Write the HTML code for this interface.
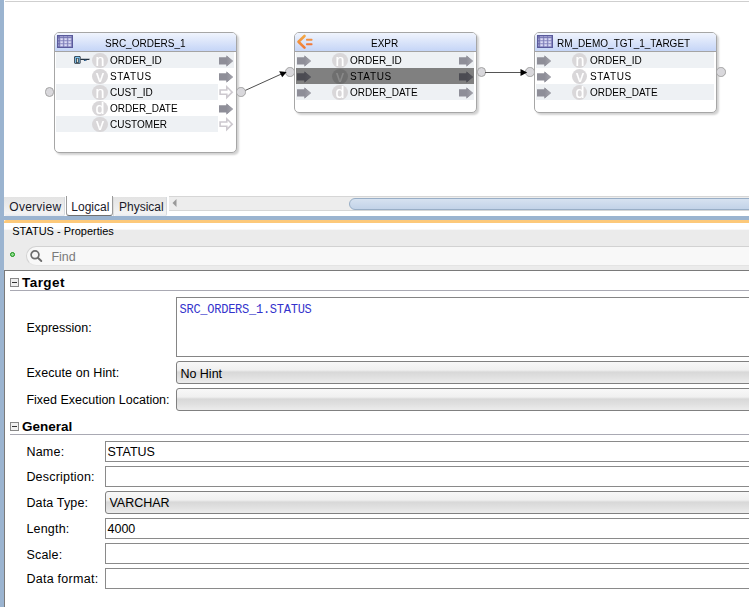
<!DOCTYPE html>
<html><head><meta charset="utf-8"><style>
html,body{margin:0;padding:0;}
body{width:749px;height:607px;overflow:hidden;position:relative;background:#fff;font-family:'Liberation Sans', sans-serif;}
.a{position:absolute;}
.t{position:absolute;white-space:pre;}
.box{box-sizing:border-box;border:1px solid #a6a6a6;border-radius:5px;background:#fff;box-shadow:2px 2px 2px rgba(0,0,0,0.18);}
</style></head><body>
<svg width="0" height="0" style="position:absolute"><defs><linearGradient id="agl" x1="0" y1="0" x2="1" y2="0"><stop offset="0" stop-color="#8e8e98"/><stop offset="1" stop-color="#a4a4ac"/></linearGradient><linearGradient id="agd" x1="0" y1="0" x2="1" y2="0"><stop offset="0" stop-color="#4b4b52"/><stop offset="1" stop-color="#55555c"/></linearGradient></defs></svg>
<div class="a" style="left:0px;top:0px;width:4px;height:607px;background:#9bb4d0"></div>
<div class="a" style="left:5px;top:1px;width:744px;height:1px;background:#cfcfcf"></div>
<div class="a box" style="left:54px;top:32px;width:183px;height:121px;"></div>
<div class="a" style="left:55px;top:33px;width:181px;height:18px;background:linear-gradient(#f0f4fd,#c5d5f7);border-radius:4px 4px 0 0"></div>
<div class="a" style="left:55px;top:51px;width:181px;height:1px;background:#a4a4a4"></div>
<svg class="a" style="left:57px;top:35px" width="16" height="13" viewBox="0 0 16 13"><rect x="0.5" y="0.5" width="15" height="12" fill="#7272ae" stroke="#5a5a9c"/><g fill="#b4b4de"><rect x="3" y="3" width="3.4" height="2.6"/><rect x="7" y="3" width="3.4" height="2.6"/><rect x="11" y="3" width="3.4" height="2.6"/><rect x="3" y="6" width="3.4" height="2.6"/><rect x="7" y="6" width="3.4" height="2.6"/><rect x="11" y="6" width="3.4" height="2.6"/><rect x="3" y="9" width="3.4" height="2.6"/><rect x="7" y="9" width="3.4" height="2.6"/><rect x="11" y="9" width="3.4" height="2.6"/></g><g fill="#e2e2f6"><rect x="3.8" y="3.6" width="1.8" height="1.3"/><rect x="7.8" y="3.6" width="1.8" height="1.3"/><rect x="11.8" y="3.6" width="1.8" height="1.3"/><rect x="3.8" y="6.6" width="1.8" height="1.3"/><rect x="7.8" y="6.6" width="1.8" height="1.3"/><rect x="11.8" y="6.6" width="1.8" height="1.3"/><rect x="3.8" y="9.6" width="1.8" height="1.3"/><rect x="7.8" y="9.6" width="1.8" height="1.3"/><rect x="11.8" y="9.6" width="1.8" height="1.3"/></g><g fill="#a8a8d8"><rect x="3" y="1.2" width="3.4" height="1"/><rect x="7" y="1.2" width="3.4" height="1"/><rect x="11" y="1.2" width="3.4" height="1"/><rect x="1.3" y="3.5" width="1" height="1.6"/><rect x="1.3" y="6.5" width="1" height="1.6"/><rect x="1.3" y="9.5" width="1" height="1.6"/></g></svg>
<div class="t" style="left:104.5px;top:38.64px;font-size:10px;line-height:10px;color:#000;font-weight:400;font-family:'Liberation Sans', sans-serif;will-change:transform">SRC_ORDERS_1</div>
<div class="a" style="left:56px;top:52px;width:178px;height:16px;background:#eef1f4"></div>
<div class="a" style="left:92.25px;top:52.55px;width:15.5px;height:15.5px;border-radius:50%;background:#d9d7d9;"></div><div class="t" style="left:92px;top:52.699999999999996px;width:16px;color:#fff;font-family:'Liberation Sans', sans-serif;font-size:16px;line-height:15px;text-align:center;-webkit-text-stroke:0.15px #fff;will-change:transform">n</div>
<div class="t" style="left:109.5px;top:56.03px;font-size:10px;line-height:10px;color:#000;font-weight:400;font-family:'Liberation Sans', sans-serif;will-change:transform">ORDER_ID</div>
<svg class="a" style="left:219px;top:54.5px" width="15" height="12" viewBox="0 0 15 12"><path d="M0 2.3 H7.5 V0.4 L14 5.9 L7.5 11.4 V9.6 H0 Z" fill="#8e8e98"/><path d="M7.5 0.4 L14 5.9 L7.5 11.4 Z" fill="url(#agl)"/></svg>
<div class="a" style="left:92.25px;top:68.55px;width:15.5px;height:15.5px;border-radius:50%;background:#d9d7d9;"></div><div class="t" style="left:92px;top:68.7px;width:16px;color:#fff;font-family:'Liberation Sans', sans-serif;font-size:16px;line-height:15px;text-align:center;-webkit-text-stroke:0.15px #fff;will-change:transform">v</div>
<div class="t" style="left:109.5px;top:72.03px;font-size:10px;line-height:10px;color:#000;font-weight:400;font-family:'Liberation Sans', sans-serif;will-change:transform;letter-spacing:0.65px">STATUS</div>
<svg class="a" style="left:219px;top:70.5px" width="15" height="12" viewBox="0 0 15 12"><path d="M0 2.3 H7.5 V0.4 L14 5.9 L7.5 11.4 V9.6 H0 Z" fill="#8e8e98"/><path d="M7.5 0.4 L14 5.9 L7.5 11.4 Z" fill="url(#agl)"/></svg>
<div class="a" style="left:56px;top:84px;width:178px;height:16px;background:#eef1f4"></div>
<div class="a" style="left:92.25px;top:84.55px;width:15.5px;height:15.5px;border-radius:50%;background:#d9d7d9;"></div><div class="t" style="left:92px;top:84.7px;width:16px;color:#fff;font-family:'Liberation Sans', sans-serif;font-size:16px;line-height:15px;text-align:center;-webkit-text-stroke:0.15px #fff;will-change:transform">n</div>
<div class="t" style="left:109.5px;top:88.03px;font-size:10px;line-height:10px;color:#000;font-weight:400;font-family:'Liberation Sans', sans-serif;will-change:transform">CUST_ID</div>
<div class="a" style="left:218px;top:84px;width:16px;height:16px;background:#fff"></div>
<svg class="a" style="left:218px;top:84.0px" width="16" height="16" viewBox="0 0 16 16"><path d="M2.1 6 H8.8 V2.8 L14.2 8.15 L8.8 13.5 V10.3 H2.1 Z" fill="#fff" stroke="#cdc9cf" stroke-width="1.6" stroke-linejoin="miter"/></svg>
<div class="a" style="left:92.25px;top:100.55px;width:15.5px;height:15.5px;border-radius:50%;background:#d9d7d9;"></div><div class="t" style="left:92px;top:100.7px;width:16px;color:#fff;font-family:'Liberation Sans', sans-serif;font-size:16px;line-height:15px;text-align:center;-webkit-text-stroke:0.15px #fff;will-change:transform">d</div>
<div class="t" style="left:109.5px;top:104.03px;font-size:10px;line-height:10px;color:#000;font-weight:400;font-family:'Liberation Sans', sans-serif;will-change:transform">ORDER_DATE</div>
<svg class="a" style="left:219px;top:102.5px" width="15" height="12" viewBox="0 0 15 12"><path d="M0 2.3 H7.5 V0.4 L14 5.9 L7.5 11.4 V9.6 H0 Z" fill="#8e8e98"/><path d="M7.5 0.4 L14 5.9 L7.5 11.4 Z" fill="url(#agl)"/></svg>
<div class="a" style="left:56px;top:116px;width:178px;height:16px;background:#eef1f4"></div>
<div class="a" style="left:92.25px;top:116.55px;width:15.5px;height:15.5px;border-radius:50%;background:#d9d7d9;"></div><div class="t" style="left:92px;top:116.7px;width:16px;color:#fff;font-family:'Liberation Sans', sans-serif;font-size:16px;line-height:15px;text-align:center;-webkit-text-stroke:0.15px #fff;will-change:transform">v</div>
<div class="t" style="left:109.5px;top:120.03px;font-size:10px;line-height:10px;color:#000;font-weight:400;font-family:'Liberation Sans', sans-serif;will-change:transform">CUSTOMER</div>
<div class="a" style="left:218px;top:116px;width:16px;height:16px;background:#fff"></div>
<svg class="a" style="left:218px;top:116.0px" width="16" height="16" viewBox="0 0 16 16"><path d="M2.1 6 H8.8 V2.8 L14.2 8.15 L8.8 13.5 V10.3 H2.1 Z" fill="#fff" stroke="#cdc9cf" stroke-width="1.6" stroke-linejoin="miter"/></svg>
<svg class="a" style="left:74px;top:55px" width="17" height="10" viewBox="0 0 17 10"><rect x="0.2" y="1" width="6.4" height="7.8" rx="1.2" fill="#22303e"/><rect x="1.1" y="1.8" width="4.6" height="6.2" rx="0.5" fill="#82c8f2"/><rect x="2.1" y="3" width="2.6" height="5" fill="#2a3848"/><rect x="2.9" y="3.6" width="1" height="3.6" fill="#f2f0d6"/><path d="M6.4 3.8 H15.8 L15.2 5.1 H13 L12.6 5.6 H11.8 L11.2 6.1 H10.3 L9.7 5.1 H6.4 Z" fill="#22303e"/><rect x="10.6" y="4.8" width="1.2" height="1" fill="#3a8ad8"/></svg>
<div class="a box" style="left:294px;top:32px;width:183px;height:81px;"></div>
<div class="a" style="left:295px;top:33px;width:181px;height:18px;background:linear-gradient(#f0f4fd,#c5d5f7);border-radius:4px 4px 0 0"></div>
<div class="a" style="left:295px;top:51px;width:181px;height:1px;background:#a4a4a4"></div>
<svg class="a" style="left:296px;top:34px" width="18" height="16" viewBox="0 0 18 16"><defs><linearGradient id="eg" x1="0" y1="0" x2="0" y2="1"><stop offset="0" stop-color="#f2a845"/><stop offset="1" stop-color="#f27a35"/></linearGradient></defs><path d="M8.5 2 L2.5 7.8 L8.5 13.6" fill="none" stroke="url(#eg)" stroke-width="2.6" stroke-linecap="round" stroke-linejoin="round"/><rect x="10" y="4.8" width="6.5" height="2" rx="0.8" fill="#f29040"/><rect x="10" y="9.2" width="6.5" height="2" rx="0.8" fill="#f27a3a"/></svg>
<div class="t" style="left:370.5px;top:38.64px;font-size:10px;line-height:10px;color:#000;font-weight:400;font-family:'Liberation Sans', sans-serif;will-change:transform">EXPR</div>
<div class="a" style="left:296px;top:52px;width:178px;height:16px;background:#eef1f4"></div>
<svg class="a" style="left:297px;top:54.5px" width="15" height="12" viewBox="0 0 15 12"><path d="M0 2.3 H7.5 V0.4 L14 5.9 L7.5 11.4 V9.6 H0 Z" fill="#8e8e98"/><path d="M7.5 0.4 L14 5.9 L7.5 11.4 Z" fill="url(#agl)"/></svg>
<svg class="a" style="left:459px;top:54.5px" width="15" height="12" viewBox="0 0 15 12"><path d="M0 2.3 H7.5 V0.4 L14 5.9 L7.5 11.4 V9.6 H0 Z" fill="#8e8e98"/><path d="M7.5 0.4 L14 5.9 L7.5 11.4 Z" fill="url(#agl)"/></svg>
<div class="a" style="left:332.25px;top:52.55px;width:15.5px;height:15.5px;border-radius:50%;background:#d9d7d9;"></div><div class="t" style="left:332px;top:52.699999999999996px;width:16px;color:#fff;font-family:'Liberation Sans', sans-serif;font-size:16px;line-height:15px;text-align:center;-webkit-text-stroke:0.15px #fff;will-change:transform">n</div>
<div class="t" style="left:349.5px;top:56.03px;font-size:10px;line-height:10px;color:#000;font-weight:400;font-family:'Liberation Sans', sans-serif;will-change:transform">ORDER_ID</div>
<div class="a" style="left:296px;top:68px;width:178px;height:16px;background:#808080"></div>
<svg class="a" style="left:297px;top:70.5px" width="15" height="12" viewBox="0 0 15 12"><path d="M0 2.3 H7.5 V0.4 L14 5.9 L7.5 11.4 V9.6 H0 Z" fill="#4b4b52"/><path d="M7.5 0.4 L14 5.9 L7.5 11.4 Z" fill="url(#agd)"/></svg>
<svg class="a" style="left:459px;top:70.5px" width="15" height="12" viewBox="0 0 15 12"><path d="M0 2.3 H7.5 V0.4 L14 5.9 L7.5 11.4 V9.6 H0 Z" fill="#4b4b52"/><path d="M7.5 0.4 L14 5.9 L7.5 11.4 Z" fill="url(#agd)"/></svg>
<div class="a" style="left:332.25px;top:68.55px;width:15.5px;height:15.5px;border-radius:50%;background:#6f6f6f;"></div><div class="t" style="left:332px;top:68.7px;width:16px;color:#8a8a8a;font-family:'Liberation Sans', sans-serif;font-size:16px;line-height:15px;text-align:center;-webkit-text-stroke:0.15px #8a8a8a;will-change:transform">v</div>
<div class="t" style="left:349.5px;top:72.03px;font-size:10px;line-height:10px;color:#000;font-weight:400;font-family:'Liberation Sans', sans-serif;will-change:transform;letter-spacing:0.65px">STATUS</div>
<div class="a" style="left:296px;top:84px;width:178px;height:16px;background:#eef1f4"></div>
<svg class="a" style="left:297px;top:86.5px" width="15" height="12" viewBox="0 0 15 12"><path d="M0 2.3 H7.5 V0.4 L14 5.9 L7.5 11.4 V9.6 H0 Z" fill="#8e8e98"/><path d="M7.5 0.4 L14 5.9 L7.5 11.4 Z" fill="url(#agl)"/></svg>
<svg class="a" style="left:459px;top:86.5px" width="15" height="12" viewBox="0 0 15 12"><path d="M0 2.3 H7.5 V0.4 L14 5.9 L7.5 11.4 V9.6 H0 Z" fill="#8e8e98"/><path d="M7.5 0.4 L14 5.9 L7.5 11.4 Z" fill="url(#agl)"/></svg>
<div class="a" style="left:332.25px;top:84.55px;width:15.5px;height:15.5px;border-radius:50%;background:#d9d7d9;"></div><div class="t" style="left:332px;top:84.7px;width:16px;color:#fff;font-family:'Liberation Sans', sans-serif;font-size:16px;line-height:15px;text-align:center;-webkit-text-stroke:0.15px #fff;will-change:transform">d</div>
<div class="t" style="left:349.5px;top:88.03px;font-size:10px;line-height:10px;color:#000;font-weight:400;font-family:'Liberation Sans', sans-serif;will-change:transform">ORDER_DATE</div>
<div class="a box" style="left:534px;top:32px;width:183px;height:81px;"></div>
<div class="a" style="left:535px;top:33px;width:181px;height:18px;background:linear-gradient(#f0f4fd,#c5d5f7);border-radius:4px 4px 0 0"></div>
<div class="a" style="left:535px;top:51px;width:181px;height:1px;background:#a4a4a4"></div>
<svg class="a" style="left:537px;top:35px" width="16" height="13" viewBox="0 0 16 13"><rect x="0.5" y="0.5" width="15" height="12" fill="#7272ae" stroke="#5a5a9c"/><g fill="#b4b4de"><rect x="3" y="3" width="3.4" height="2.6"/><rect x="7" y="3" width="3.4" height="2.6"/><rect x="11" y="3" width="3.4" height="2.6"/><rect x="3" y="6" width="3.4" height="2.6"/><rect x="7" y="6" width="3.4" height="2.6"/><rect x="11" y="6" width="3.4" height="2.6"/><rect x="3" y="9" width="3.4" height="2.6"/><rect x="7" y="9" width="3.4" height="2.6"/><rect x="11" y="9" width="3.4" height="2.6"/></g><g fill="#e2e2f6"><rect x="3.8" y="3.6" width="1.8" height="1.3"/><rect x="7.8" y="3.6" width="1.8" height="1.3"/><rect x="11.8" y="3.6" width="1.8" height="1.3"/><rect x="3.8" y="6.6" width="1.8" height="1.3"/><rect x="7.8" y="6.6" width="1.8" height="1.3"/><rect x="11.8" y="6.6" width="1.8" height="1.3"/><rect x="3.8" y="9.6" width="1.8" height="1.3"/><rect x="7.8" y="9.6" width="1.8" height="1.3"/><rect x="11.8" y="9.6" width="1.8" height="1.3"/></g><g fill="#a8a8d8"><rect x="3" y="1.2" width="3.4" height="1"/><rect x="7" y="1.2" width="3.4" height="1"/><rect x="11" y="1.2" width="3.4" height="1"/><rect x="1.3" y="3.5" width="1" height="1.6"/><rect x="1.3" y="6.5" width="1" height="1.6"/><rect x="1.3" y="9.5" width="1" height="1.6"/></g></svg>
<div class="t" style="left:556.5px;top:38.64px;font-size:10px;line-height:10px;color:#000;font-weight:400;font-family:'Liberation Sans', sans-serif;will-change:transform">RM_DEMO_TGT_1_TARGET</div>
<div class="a" style="left:536px;top:52px;width:178px;height:16px;background:#eef1f4"></div>
<svg class="a" style="left:537px;top:54.5px" width="15" height="12" viewBox="0 0 15 12"><path d="M0 2.3 H7.5 V0.4 L14 5.9 L7.5 11.4 V9.6 H0 Z" fill="#8e8e98"/><path d="M7.5 0.4 L14 5.9 L7.5 11.4 Z" fill="url(#agl)"/></svg>
<div class="a" style="left:571.95px;top:52.55px;width:15.5px;height:15.5px;border-radius:50%;background:#d9d7d9;"></div><div class="t" style="left:571.7px;top:52.699999999999996px;width:16px;color:#fff;font-family:'Liberation Sans', sans-serif;font-size:16px;line-height:15px;text-align:center;-webkit-text-stroke:0.15px #fff;will-change:transform">n</div>
<div class="t" style="left:589.7px;top:56.03px;font-size:10px;line-height:10px;color:#000;font-weight:400;font-family:'Liberation Sans', sans-serif;will-change:transform">ORDER_ID</div>
<svg class="a" style="left:537px;top:70.5px" width="15" height="12" viewBox="0 0 15 12"><path d="M0 2.3 H7.5 V0.4 L14 5.9 L7.5 11.4 V9.6 H0 Z" fill="#8e8e98"/><path d="M7.5 0.4 L14 5.9 L7.5 11.4 Z" fill="url(#agl)"/></svg>
<div class="a" style="left:571.95px;top:68.55px;width:15.5px;height:15.5px;border-radius:50%;background:#d9d7d9;"></div><div class="t" style="left:571.7px;top:68.7px;width:16px;color:#fff;font-family:'Liberation Sans', sans-serif;font-size:16px;line-height:15px;text-align:center;-webkit-text-stroke:0.15px #fff;will-change:transform">v</div>
<div class="t" style="left:589.7px;top:72.03px;font-size:10px;line-height:10px;color:#000;font-weight:400;font-family:'Liberation Sans', sans-serif;will-change:transform;letter-spacing:0.65px">STATUS</div>
<div class="a" style="left:536px;top:84px;width:178px;height:16px;background:#eef1f4"></div>
<svg class="a" style="left:537px;top:86.5px" width="15" height="12" viewBox="0 0 15 12"><path d="M0 2.3 H7.5 V0.4 L14 5.9 L7.5 11.4 V9.6 H0 Z" fill="#8e8e98"/><path d="M7.5 0.4 L14 5.9 L7.5 11.4 Z" fill="url(#agl)"/></svg>
<div class="a" style="left:571.95px;top:84.55px;width:15.5px;height:15.5px;border-radius:50%;background:#d9d7d9;"></div><div class="t" style="left:571.7px;top:84.7px;width:16px;color:#fff;font-family:'Liberation Sans', sans-serif;font-size:16px;line-height:15px;text-align:center;-webkit-text-stroke:0.15px #fff;will-change:transform">d</div>
<div class="t" style="left:589.7px;top:88.03px;font-size:10px;line-height:10px;color:#000;font-weight:400;font-family:'Liberation Sans', sans-serif;will-change:transform">ORDER_DATE</div>
<div class="a" style="left:44.75px;top:87.25px;width:9.5px;height:9.5px;border-radius:50%;background:#d9d8dc;box-sizing:border-box;border:1px solid #a3a3a3"></div>
<div class="a" style="left:236.25px;top:87.05px;width:9.5px;height:9.5px;border-radius:50%;background:#d9d8dc;box-sizing:border-box;border:1px solid #a3a3a3"></div>
<div class="a" style="left:285.25px;top:67.15px;width:9.5px;height:9.5px;border-radius:50%;background:#d9d8dc;box-sizing:border-box;border:1px solid #a3a3a3"></div>
<div class="a" style="left:476.55px;top:67.25px;width:9.5px;height:9.5px;border-radius:50%;background:#d9d8dc;box-sizing:border-box;border:1px solid #a3a3a3"></div>
<div class="a" style="left:525.05px;top:67.25px;width:9.5px;height:9.5px;border-radius:50%;background:#d9d8dc;box-sizing:border-box;border:1px solid #a3a3a3"></div>
<div class="a" style="left:716.45px;top:67.25px;width:9.5px;height:9.5px;border-radius:50%;background:#d9d8dc;box-sizing:border-box;border:1px solid #a3a3a3"></div>
<svg class="a" style="left:0;top:0" width="749" height="150" viewBox="0 0 749 150"><line x1="245.5" y1="90.3" x2="281" y2="74.2" stroke="#3a3a3a" stroke-width="0.9"/><path d="M286.6 72 L279.2 71.2 L282.2 77.3 Z" fill="#000"/><rect x="485" y="72" width="36" height="1" fill="#555"/><path d="M527.2 72.5 L520.5 69 L520.5 76 Z" fill="#000"/></svg>
<div class="a" style="left:4px;top:197px;width:61px;height:19px;background:linear-gradient(#e3e3e3,#f3f3f3 85%,#e9ecf0);border-radius:0 0 2px 2px;box-sizing:border-box;border-right:1px solid #d6dade"></div>
<div class="a" style="left:66px;top:196px;width:47px;height:20px;background:#fff;border:1px solid #9a9a9a;border-bottom-color:#707070;border-top:none;box-sizing:border-box;border-radius:0 0 3px 3px"></div>
<div class="a" style="left:113px;top:197px;width:1px;height:19px;background:#dcdcdc"></div>
<div class="a" style="left:114px;top:197px;width:53px;height:19px;background:linear-gradient(#e3e3e3,#f3f3f3 85%,#e9ecf0);border-radius:0 0 2px 2px;box-sizing:border-box;border-right:1px solid #d6dade"></div>
<div class="t" style="left:9.3px;top:201.24px;font-size:12px;line-height:12px;color:#1a1a2a;font-weight:400;font-family:'Liberation Sans', sans-serif;letter-spacing:0.25px">Overview</div>
<div class="t" style="left:71.3px;top:201.24px;font-size:12px;line-height:12px;color:#1a1a2a;font-weight:400;font-family:'Liberation Sans', sans-serif;">Logical</div>
<div class="t" style="left:119px;top:201.24px;font-size:12px;line-height:12px;color:#1a1a2a;font-weight:400;font-family:'Liberation Sans', sans-serif;">Physical</div>
<div class="a" style="left:169px;top:196px;width:580px;height:15px;background:#ededed;border-top:1px solid #d6d6d6;border-bottom:1px solid #d6d6d6;box-sizing:border-box"></div>
<svg class="a" style="left:172px;top:199px" width="6" height="9"><path d="M4.5 0 V8 L0.5 4 Z" fill="#9a9a9a"/></svg>
<div class="a" style="left:349px;top:198px;width:420px;height:12px;background:linear-gradient(#d6e2f0,#c2d3e8);border:1px solid #98aec6;box-sizing:border-box;border-radius:6px"></div>
<div class="a" style="left:0px;top:216px;width:749px;height:4px;background:#9bb4d0"></div>
<div class="a" style="left:4px;top:220px;width:745px;height:3px;background:#fdc97a;border-radius:2px 0 0 0"></div>
<div class="a" style="left:4px;top:223px;width:745px;height:47px;background:linear-gradient(#fff 0px,#fff 6px,#ebebeb 7.5px,#ebebeb 47px)"></div>
<div class="t" style="left:12.2px;top:226.49px;font-size:11px;line-height:11px;color:#000;font-weight:400;font-family:'Liberation Sans', sans-serif;">STATUS - Properties</div>
<div class="a" style="left:10px;top:252px;width:5px;height:5px;border-radius:50%;box-sizing:border-box;border:1.5px solid #0f8f0f;background:#90dc90"></div>
<div class="a" style="left:26px;top:246px;width:740px;height:20px;background:#f8f8f8;border:1px solid #d2d2d2;border-bottom-color:#e4e4e4;box-sizing:border-box;border-radius:10px"></div>
<svg class="a" style="left:29px;top:250px" width="14" height="13"><circle cx="6" cy="4.8" r="3.9" fill="none" stroke="#6e6e6e" stroke-width="1.7"/><path d="M8.9 7.7 L12.3 11" stroke="#6e6e6e" stroke-width="1.9" stroke-linecap="round"/></svg>
<div class="t" style="left:51.4px;top:251.12px;font-size:12.5px;line-height:12.5px;color:#7a7a7a;font-weight:400;font-family:'Liberation Sans', sans-serif;">Find</div>
<div class="a" style="left:4px;top:270px;width:745px;height:337px;background:#fff;border-top:1px solid #7a7a7a;border-left:1px solid #7a7a7a;box-sizing:border-box"></div>
<svg class="a" style="left:10px;top:278px" width="9" height="9"><rect x="0.5" y="0.5" width="8" height="8" fill="#f0f0f0" stroke="#888"/><rect x="2" y="4" width="5" height="1" fill="#333"/></svg>
<div class="t" style="left:22px;top:276.07px;font-size:13.5px;line-height:13.5px;color:#000;font-weight:700;font-family:'Liberation Sans', sans-serif;letter-spacing:0.45px">Target</div>
<div class="a" style="left:10px;top:290px;width:739px;height:1px;background:#a9a9b3"></div>
<div class="t" style="left:26.4px;top:322.42px;font-size:12.5px;line-height:12.5px;color:#000;font-weight:400;font-family:'Liberation Sans', sans-serif;">Expression:</div>
<div class="a" style="left:176px;top:297px;width:600px;height:60px;border:1px solid #858585;box-sizing:border-box;background:#fff"></div>
<div class="t" style="left:179.5px;top:303.54px;font-size:12px;line-height:12px;color:#3333cc;font-weight:400;font-family:'Liberation Mono', monospace;letter-spacing:-0.25px">SRC_ORDERS_1.STATUS</div>
<div class="t" style="left:26.4px;top:367.22px;font-size:12.5px;line-height:12.5px;color:#000;font-weight:400;font-family:'Liberation Sans', sans-serif;letter-spacing:0.08px">Execute on Hint:</div>
<div class="a" style="left:176px;top:361px;width:600px;height:23px;border:1px solid #808080;box-sizing:border-box;border-radius:3px;background:linear-gradient(#f8f8f8 0%,#f0f0f0 38%,#d8d8d8 48%,#e0e0e0 72%,#ececec 100%)"></div>
<div class="t" style="left:180.4px;top:368.12px;font-size:12.5px;line-height:12.5px;color:#000;font-weight:400;font-family:'Liberation Sans', sans-serif;">No Hint</div>
<div class="t" style="left:26.4px;top:394.32px;font-size:12.5px;line-height:12.5px;color:#000;font-weight:400;font-family:'Liberation Sans', sans-serif;">Fixed Execution Location:</div>
<div class="a" style="left:176px;top:388px;width:600px;height:23px;border:1px solid #808080;box-sizing:border-box;border-radius:3px;background:linear-gradient(#f8f8f8 0%,#f0f0f0 38%,#d8d8d8 48%,#e0e0e0 72%,#ececec 100%)"></div>
<svg class="a" style="left:10px;top:422px" width="9" height="9"><rect x="0.5" y="0.5" width="8" height="8" fill="#f0f0f0" stroke="#888"/><rect x="2" y="4" width="5" height="1" fill="#333"/></svg>
<div class="t" style="left:22px;top:419.77px;font-size:13.5px;line-height:13.5px;color:#000;font-weight:700;font-family:'Liberation Sans', sans-serif;">General</div>
<div class="a" style="left:10px;top:434px;width:739px;height:1px;background:#a9a9b3"></div>
<div class="t" style="left:26.4px;top:446.12px;font-size:12.5px;line-height:12.5px;color:#000;font-weight:400;font-family:'Liberation Sans', sans-serif;letter-spacing:0.25px">Name:</div>
<div class="a" style="left:105px;top:441px;width:700px;height:21px;border:1px solid #8a8a8a;box-sizing:border-box;background:#fff"></div>
<div class="t" style="left:107.5px;top:446.12px;font-size:12.5px;line-height:12.5px;color:#000;font-weight:400;font-family:'Liberation Sans', sans-serif;">STATUS</div>
<div class="t" style="left:26.4px;top:471.32px;font-size:12.5px;line-height:12.5px;color:#000;font-weight:400;font-family:'Liberation Sans', sans-serif;letter-spacing:0.2px">Description:</div>
<div class="a" style="left:105px;top:466px;width:700px;height:21px;border:1px solid #8a8a8a;box-sizing:border-box;background:#fff"></div>
<div class="t" style="left:26.4px;top:497.32px;font-size:12.5px;line-height:12.5px;color:#000;font-weight:400;font-family:'Liberation Sans', sans-serif;letter-spacing:0.15px">Data Type:</div>
<div class="a" style="left:105px;top:491px;width:700px;height:23px;border:1px solid #808080;box-sizing:border-box;border-radius:3px;background:linear-gradient(#f8f8f8 0%,#f0f0f0 38%,#d8d8d8 48%,#e0e0e0 72%,#ececec 100%)"></div>
<div class="t" style="left:109.4px;top:497.32px;font-size:12.5px;line-height:12.5px;color:#000;font-weight:400;font-family:'Liberation Sans', sans-serif;">VARCHAR</div>
<div class="t" style="left:26.4px;top:523.32px;font-size:12.5px;line-height:12.5px;color:#000;font-weight:400;font-family:'Liberation Sans', sans-serif;letter-spacing:0.2px">Length:</div>
<div class="a" style="left:105px;top:518px;width:700px;height:21px;border:1px solid #8a8a8a;box-sizing:border-box;background:#fff"></div>
<div class="t" style="left:107.5px;top:523.32px;font-size:12.5px;line-height:12.5px;color:#000;font-weight:400;font-family:'Liberation Sans', sans-serif;">4000</div>
<div class="t" style="left:26.4px;top:548.52px;font-size:12.5px;line-height:12.5px;color:#000;font-weight:400;font-family:'Liberation Sans', sans-serif;letter-spacing:0.2px">Scale:</div>
<div class="a" style="left:105px;top:543px;width:700px;height:21px;border:1px solid #8a8a8a;box-sizing:border-box;background:#fff"></div>
<div class="t" style="left:26.4px;top:573.32px;font-size:12.5px;line-height:12.5px;color:#000;font-weight:400;font-family:'Liberation Sans', sans-serif;letter-spacing:0.27px">Data format:</div>
<div class="a" style="left:105px;top:568px;width:700px;height:21px;border:1px solid #8a8a8a;box-sizing:border-box;background:#fff"></div>

</body></html>
